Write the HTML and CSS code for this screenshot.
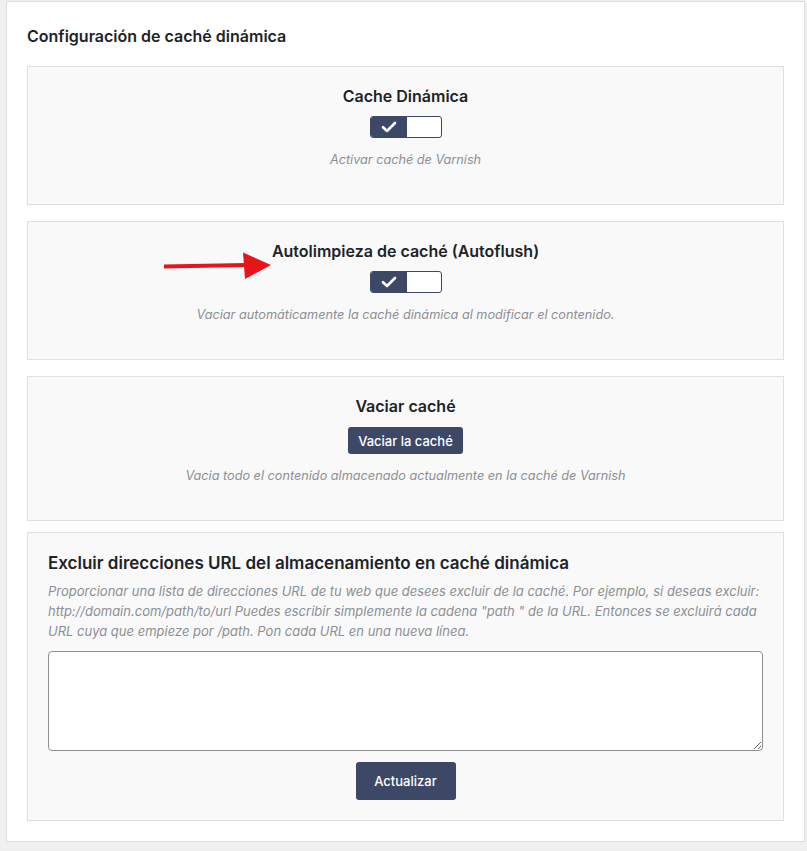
FILE: index.html
```html
<!DOCTYPE html>
<html lang="es">
<head>
<meta charset="utf-8">
<title>Configuración de caché dinámica</title>
<link rel="stylesheet" href="styles.css">
</head>
<body>
<div class="card">
  <h2 class="card-title">Configuración de caché dinámica</h2>

  <section class="panel panel-center">
    <h3 class="panel-heading">Cache Dinámica</h3>
    <div class="toggle">
      <span class="toggle-on">
        <svg width="16" height="12" viewBox="0 0 16 12"><path d="M2 6.2 L6 10 L14 2" fill="none" stroke="#fff" stroke-width="2.6" stroke-linecap="round" stroke-linejoin="round"/></svg>
      </span>
      <span class="toggle-off"></span>
    </div>
    <p class="panel-desc">Activar caché de Varnish</p>
  </section>

  <section class="panel panel-center panel-arrow">
    <svg class="arrow" width="110" height="28" viewBox="0 0 110 28"><path d="M0 14.5 L82 13" stroke="#e8141b" stroke-width="4" fill="none"/><path d="M79 0.5 L107 13 L81 27 Z" fill="#e8141b"/></svg>
    <h3 class="panel-heading">Autolimpieza de caché (Autoflush)</h3>
    <div class="toggle">
      <span class="toggle-on">
        <svg width="16" height="12" viewBox="0 0 16 12"><path d="M2 6.2 L6 10 L14 2" fill="none" stroke="#fff" stroke-width="2.6" stroke-linecap="round" stroke-linejoin="round"/></svg>
      </span>
      <span class="toggle-off"></span>
    </div>
    <p class="panel-desc">Vaciar automáticamente la caché dinámica al modificar el contenido.</p>
  </section>

  <section class="panel panel-center panel-purge">
    <h3 class="panel-heading">Vaciar caché</h3>
    <button class="btn btn-small" type="button">Vaciar la caché</button>
    <p class="panel-desc">Vacia todo el contenido almacenado actualmente en la caché de Varnish</p>
  </section>

  <section class="panel panel-exclude">
    <h3 class="exclude-heading">Excluir direcciones URL del almacenamiento en caché dinámica</h3>
    <p class="exclude-desc">Proporcionar una lista de direcciones URL de tu web que desees excluir de la caché. Por ejemplo, si deseas excluir: http://domain.com/path/to/url Puedes escribir simplemente la cadena "path " de la URL. Entonces se excluirá cada URL cuya que empieze por /path. Pon cada URL en una nueva línea.</p>
    <textarea class="exclude-input"></textarea>
    <div class="exclude-actions">
      <button class="btn btn-large" type="button">Actualizar</button>
    </div>
  </section>
</div>
</body>
</html>
```

FILE: styles.css
```css
* { box-sizing: border-box; }

html, body {
  margin: 0;
  padding: 0;
  background: #f0f0f1;
}

body {
  font-family: Inter, "Noto Sans", "Liberation Sans", sans-serif;
  color: #1d2327;
  padding: 1px 2px 11px 6px;
}

.card {
  background: #fff;
  border: 1px solid #dcdcde;
  padding: 20px 20px 20px 20px;
}

.card-title {
  margin: 0 0 18px 0;
  font-size: 16px;
  line-height: 24px;
  font-weight: 600;
  padding-top: 2px;
}

.panel {
  background: #f9f9f9;
  border: 1px solid #e0e0e0;
  margin-bottom: 16px;
}

.panel-center {
  display: flex;
  flex-direction: column;
  align-items: center;
  padding: 19px 20px 34px;
}

.panel-arrow { position: relative; }

.arrow {
  position: absolute;
  left: 136px;
  top: 30px;
}

.panel-purge { margin-bottom: 11px; }

.panel-heading {
  margin: 0;
  font-size: 16px;
  line-height: 20px;
  font-weight: 600;
}

.toggle {
  display: flex;
  width: 72px;
  height: 22px;
  margin-top: 10px;
  border: 1px solid #3d4867;
  border-radius: 3px;
  overflow: hidden;
  background: #fff;
}

.toggle-on {
  width: 36px;
  background: #3d4867;
  display: flex;
  align-items: center;
  justify-content: center;
}

.toggle-off { flex: 1; }

.panel-desc {
  margin: 12px 0 0;
  font-size: 12.7px;
  line-height: 20px;
  font-style: italic;
  color: #8c8f94;
  text-align: center;
}

.panel-purge .panel-desc { margin-top: 12px; }

.btn {
  font-family: inherit;
  background: #3d4867;
  color: #fff;
  border: none;
  border-radius: 3px;
  font-weight: 500;
  cursor: pointer;
}

.btn-small {
  margin-top: 11px;
  height: 27px;
  padding: 0 10px;
  font-size: 13px;
}

.btn-large {
  height: 38px;
  width: 100px;
  font-size: 13px;
}

.panel-exclude {
  padding: 17px 20px 20px;
  margin-bottom: 0;
}

.exclude-heading {
  margin: 0;
  font-size: 17px;
  line-height: 26px;
  font-weight: 600;
}

.exclude-desc {
  margin: 5px 0 0;
  font-size: 13px;
  line-height: 20px;
  font-style: italic;
  color: #8c8f94;
}

.exclude-input {
  display: block;
  width: 100%;
  height: 100px;
  margin-top: 10px;
  border: 1px solid #8c8f94;
  border-radius: 4px;
  background: #fff;
  font-family: inherit;
  resize: vertical;
}

.exclude-actions {
  display: flex;
  justify-content: center;
  margin-top: 11px;
}
```
